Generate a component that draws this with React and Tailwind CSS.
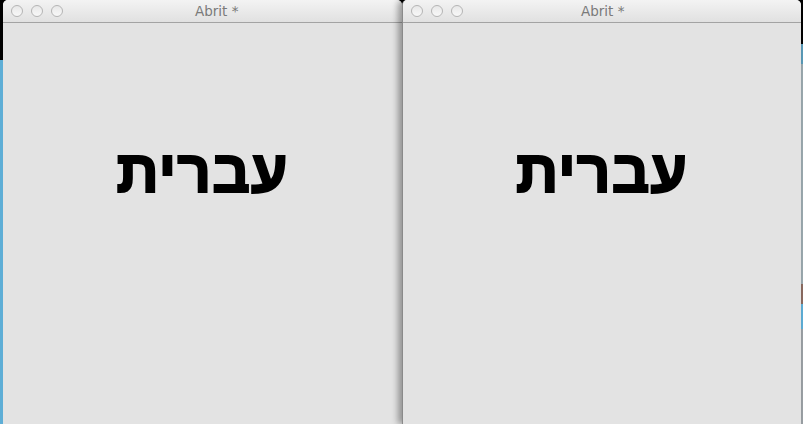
export default function App() {
  const Lights = () => (
    <div className="flex items-center gap-[8px] pl-[8px]">
      {[0, 1, 2].map((i) => (
        <div key={i} className="w-[12px] h-[12px] rounded-full border border-[#b4b4b4] bg-gradient-to-b from-[#e8e8e8] to-[#f8f8f8]" />
      ))}
    </div>
  );
  const Window = ({ titleOffset, shadow }) => (
    <div className={`relative flex flex-col w-[399px] h-[424px] rounded-t-[5px] overflow-hidden bg-[#e3e3e3] ${shadow ? "shadow-[-4px_0_6px_rgba(0,0,0,0.35)] border-l border-[#8a8a8a]" : ""}`}>
      <div className="relative h-[23px] flex items-center bg-gradient-to-b from-[#f3f3f3] to-[#e1e1e1] border-b border-[#a3a3a3]">
        <Lights />
        <div className={`absolute top-0 h-[22px] flex items-center text-[#7a7a7a] ${titleOffset}`} style={{ fontFamily: '"DejaVu Sans", "Liberation Sans", sans-serif', fontSize: 13.5 }}>
          Abrit *
        </div>
      </div>
      <div className="flex-1 flex items-start justify-center pt-[120px]">
        <div dir="rtl" className="text-[59px] font-bold text-black leading-none [-webkit-text-stroke:2px_black] tracking-[1px]" style={{ fontFamily: '"Liberation Sans", "DejaVu Sans", sans-serif' }}>
          עברית
        </div>
      </div>
    </div>
  );
  return (
    <div className="w-[803px] h-[424px] flex bg-black overflow-hidden">
      <div className="w-[3px] flex flex-col">
        <div className="h-[60px] bg-black" />
        <div className="flex-1 bg-[#5eaed6]" />
      </div>
      <Window titleOffset="left-[192px]" />
      <Window titleOffset="left-[178px]" shadow />
      <div className="w-[2px] flex flex-col">
        <div className="h-[44px] bg-black" />
        <div className="h-[20px] bg-[#5a9ab8]" />
        <div className="h-[220px] bg-[#9aa8ae]" />
        <div className="h-[20px] bg-[#8a6a60]" />
        <div className="h-[25px] bg-[#5eaed6]" />
        <div className="flex-1 bg-[#9aa0a4]" />
      </div>
    </div>
  );
}
